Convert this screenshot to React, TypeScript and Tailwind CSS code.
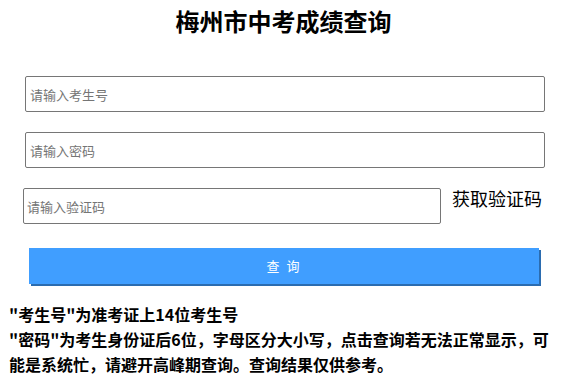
import React from "react";

export default function App() {
  return (
    <div className="w-[567px] h-[392px] bg-white text-black font-['Microsoft_YaHei','Noto_Sans_CJK_SC',sans-serif] overflow-hidden">
      <h1 className="pt-[5px] text-center text-[24px] leading-[32px] font-bold">梅州市中考成绩查询</h1>
      <div className="mt-[39px] flex flex-col gap-[20px]">
        <div className="pl-[25px] pr-[22px]">
          <input
            placeholder="请输入考生号"
            className="w-full h-[36px] border border-[#767676] rounded-[2px] px-[4px] text-[13px] placeholder:text-[#757575] outline-none"
          />
        </div>
        <div className="pl-[25px] pr-[22px]">
          <input
            placeholder="请输入密码"
            className="w-full h-[36px] border border-[#767676] rounded-[2px] px-[4px] text-[13px] placeholder:text-[#757575] outline-none"
          />
        </div>
        <div className="pl-[23px] flex items-start">
          <input
            placeholder="请输入验证码"
            className="w-[418px] h-[36px] border border-[#767676] rounded-[2px] px-[3px] text-[13px] placeholder:text-[#757575] outline-none"
          />
          <span className="ml-[11px] -mt-[2px] text-[18px] leading-[24px]">获取验证码</span>
        </div>
      </div>
      <div className="mt-[24px] pl-[29px]">
        <button className="w-[510px] h-[36px] bg-[#409eff] text-white text-[13px] tracking-[2px] shadow-[2px_2px_0_0_#2b6cb0]">
          查 询
        </button>
      </div>
      <div className="mt-[18px] pl-[9px] pr-[12px] text-[16px] leading-[25px] font-bold">
        <p>"考生号"为准考证上14位考生号</p>
        <p>"密码"为考生身份证后6位，字母区分大小写，点击查询若无法正常显示，可能是系统忙，请避开高峰期查询。查询结果仅供参考。</p>
      </div>
    </div>
  );
}
